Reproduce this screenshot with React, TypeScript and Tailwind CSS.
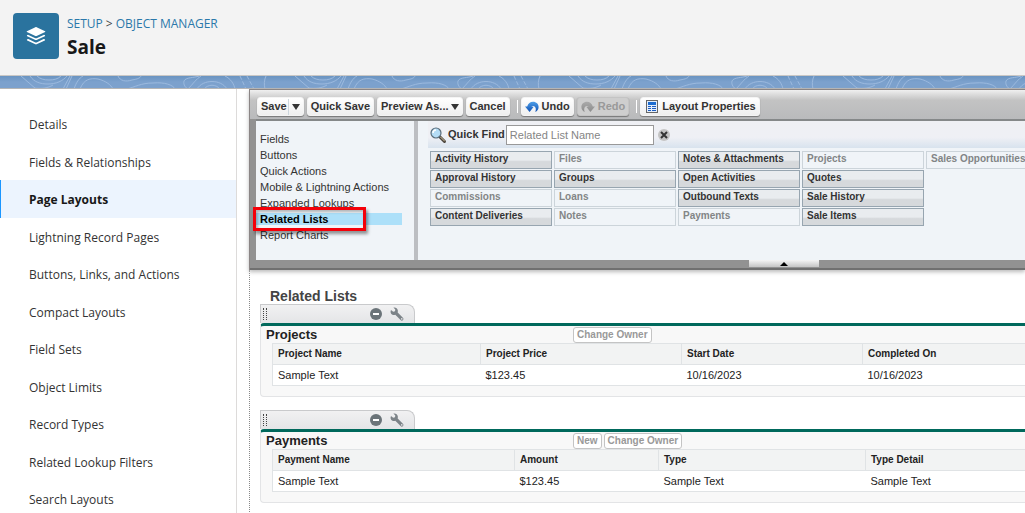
import type { ReactNode } from "react";

const navItems = [
  "Details",
  "Fields & Relationships",
  "Page Layouts",
  "Lightning Record Pages",
  "Buttons, Links, and Actions",
  "Compact Layouts",
  "Field Sets",
  "Object Limits",
  "Record Types",
  "Related Lookup Filters",
  "Search Layouts",
];

const categories = [
  "Fields",
  "Buttons",
  "Quick Actions",
  "Mobile & Lightning Actions",
  "Expanded Lookups",
  "Related Lists",
  "Report Charts",
];

type PaletteItem = { label: string; used?: boolean };

// filled column by column
const palette: PaletteItem[] = [
  { label: "Activity History" },
  { label: "Approval History" },
  { label: "Commissions", used: true },
  { label: "Content Deliveries" },
  { label: "Files", used: true },
  { label: "Groups" },
  { label: "Loans", used: true },
  { label: "Notes", used: true },
  { label: "Notes & Attachments" },
  { label: "Open Activities" },
  { label: "Outbound Texts" },
  { label: "Payments", used: true },
  { label: "Projects", used: true },
  { label: "Quotes" },
  { label: "Sale History" },
  { label: "Sale Items" },
  { label: "Sales Opportunities", used: true },
];

type Column = { label: string; value: string; width: string };

const projectColumns: Column[] = [
  { label: "Project Name", value: "Sample Text", width: "w-[208px]" },
  { label: "Project Price", value: "$123.45", width: "w-[201px]" },
  { label: "Start Date", value: "10/16/2023", width: "w-[181px]" },
  { label: "Completed On", value: "10/16/2023", width: "w-auto" },
];

const paymentColumns: Column[] = [
  { label: "Payment Name", value: "Sample Text", width: "w-[242px]" },
  { label: "Amount", value: "$123.45", width: "w-[144px]" },
  { label: "Type", value: "Sample Text", width: "w-[207px]" },
  { label: "Type Detail", value: "Sample Text", width: "w-auto" },
];

function LayersIcon() {
  return (
    <svg viewBox="0 0 20 20" className="h-5 w-5" fill="#fff" aria-hidden>
      <path d="M9.4 1.2 0.9 5.2c-.4.2-.4.7 0 .9l8.5 4c.4.2.8.2 1.2 0l8.5-4c.4-.2.4-.7 0-.9l-8.5-4c-.4-.2-.8-.2-1.2 0z" />
      <path d="M1 9.3c.3-.3.9-.6 1.4-.4l7 3.3c.4.2.8.2 1.2 0l7-3.3c.5-.2 1.1.1 1.4.4.3.3.1.7-.2.9l-8.2 3.9c-.4.2-.8.2-1.2 0l-8.2-3.9c-.3-.2-.5-.6-.2-.9z" />
      <path d="M1 13.5c.3-.3.9-.6 1.4-.4l7 3.3c.4.2.8.2 1.2 0l7-3.3c.5-.2 1.1.1 1.4.4.3.3.1.7-.2.9l-8.2 3.9c-.4.2-.8.2-1.2 0l-8.2-3.9c-.3-.2-.5-.6-.2-.9z" />
    </svg>
  );
}

function ArrowCurve({ className, from, to }: { className: string; from: string; to: string }) {
  const id = `curve-${from.slice(1)}`;
  return (
    <svg viewBox="0 0 14 12" className={className} aria-hidden>
      <defs>
        <linearGradient id={id} x1="0" y1="0" x2="0" y2="1">
          <stop offset="0" stopColor={from} />
          <stop offset="1" stopColor={to} />
        </linearGradient>
      </defs>
      <path
        d="M0 5.500H2.200C3 2.400 5.400 .7 8 .7c3.300 0 5.600 2.400 5.600 5.200 0 2.300-1.300 4.200-3.400 5.200.7-1.600.8-3.200.3-4.400C9.900 5.400 8.900 4.800 7.900 4.900c-.9.100-1.400.4-1.600.700L8.700 5.700 4.600 11z"
        fill={`url(#${id})`}
      />
    </svg>
  );
}

function PropertiesIcon() {
  return (
    <svg viewBox="0 0 12 13" className="mr-px ml-0.5 h-[13px] w-3" aria-hidden>
      <rect x=".5" y=".5" width="11" height="12" fill="#e4eefb" stroke="#666" />
      <rect x="2" y="2" width="8" height="3" fill="#1c6cd0" />
      <path d="M2 6.500h3M6 6.500h4M2 8.500h3M6 8.500h4M2 10.500h3M6 10.500h4" stroke="#1c5cc0" />
    </svg>
  );
}

function SearchIcon() {
  return (
    <svg viewBox="0 0 16 16" className="h-4 w-4" aria-hidden>
      <path d="m9.500 9.500 5 5" stroke="#4b443c" strokeWidth="3" strokeLinecap="round" />
      <path d="m10.500 10 4 4" stroke="#d9c9a3" strokeLinecap="round" />
      <circle cx="6" cy="6" r="5" fill="#b4dcf5" stroke="#5b6e7c" strokeWidth="1.200" />
      <path d="M3 6a3 3 0 0 1 3-3" stroke="#fff" strokeWidth="1.500" fill="none" />
    </svg>
  );
}

function WrenchIcon() {
  return (
    <svg viewBox="0 0 14 14" className="block h-[14px] w-[14px]" aria-hidden>
      <path
        d="M3.4.5 5.300 2.400 5 4.300 3.200 4.700 1 3C0 4.800.7 6.900 2.400 7.700c1 .5 2 .4 2.900.1l5.300 5.300c.7.7 1.800.7 2.400 0s.6-1.700-.1-2.400L7.700 5.400c.4-1.300.2-2.700-.8-3.800C6 .6 4.700.2 3.400.5z"
        fill="#7c8388"
      />
      <circle cx="11.800" cy="11.900" r=".8" fill="#e9eaec" />
    </svg>
  );
}

function Caret() {
  return <span className="h-0 w-0 border-x-4 border-t-[6px] border-x-transparent border-t-[#333]" aria-hidden />;
}

function ToolButton({ children, disabled }: { children: ReactNode; disabled?: boolean }) {
  return (
    <button
      type="button"
      disabled={disabled}
      className="flex h-[19px] shrink-0 items-center gap-[3px] rounded-[3px] border border-[#f4f4f4] bg-linear-to-b from-white to-[#efefef] px-[3px] text-[11px] font-bold whitespace-nowrap text-[#333] shadow-[0_1px_1px_#777] disabled:border-[#c4c4c4] disabled:bg-[#cecece] disabled:bg-none disabled:text-[#999]"
    >
      {children}
    </button>
  );
}

function Divider() {
  return <span className="ml-1 h-[13px] w-px shrink-0 bg-white" aria-hidden />;
}

function Contours() {
  return (
    <svg className="block h-3 w-full" aria-hidden>
      <defs>
        <pattern id="contours" width="274" height="13" patternUnits="userSpaceOnUse">
          <g fill="none" stroke="#9bb9de" strokeWidth="1">
            <path d="M21 0 36 13M30 0c4 6 10 8 18 8s15-3 19-8M37 0c3 3 7 4 12 4s9-1 12-4M34 12c8 1 14 0 19-3M63 13l7-13" />
            <path d="M66 13l6-13M74 13c2-6 5-11 9-13M80 13c4-10 10-11 18-10 8 2 13 6 15 10" />
            <path d="M118 0c2 5 8 6 14 4 6-1 8-2 9-4M127 13c8-2 14-6 26-6 12-1 20 2 22 6" />
            <path d="M184 5c2-4 10-3 15-5M184 5c-1 4 2 7 4 8M188 13c5-5 8-10 13-13M197 13c6-10 24-10 30 0M204 13c4-5 12-5 16 0" />
            <path d="M225 0c6 3 9 8 10 13M266 0c-2 4-2 9-1 13" />
            <path d="M240 0l6 13M247 0l7 13" strokeDasharray="4 2" />
          </g>
        </pattern>
      </defs>
      <rect width="100%" height="12" fill="url(#contours)" />
    </svg>
  );
}

function RelatedList({ title, actions, columns }: { title: string; actions: string[]; columns: Column[] }) {
  return (
    <section className="mb-[13px]">
      <div className="flex h-[19px] w-[155px] items-center rounded-tr-lg border border-b-0 border-[#c9cacc] bg-linear-to-b from-[#f1f1f2] to-[#e4e5e7] pr-2.5 pl-0.5">
        <span className="h-3 w-1 border-x border-dotted border-[#444]" aria-hidden />
        <button type="button" aria-label={`Remove ${title}`} className="ml-auto grid h-3 w-3 place-items-center rounded-full bg-[#6b7479]">
          <span className="h-0.5 w-1.5 bg-white" />
        </button>
        <button type="button" aria-label={`Edit ${title}`} className="ml-2">
          <WrenchIcon />
        </button>
      </div>
      <div className="h-[74px] rounded-l-[4px] border border-t-3 border-r-0 border-[#e3e4e6] border-t-[#00695c] bg-[#f8f8f8] pl-[11px]">
        <div className="flex h-[17px] items-center">
          <h3 className="-ml-1.5 w-[307px] text-[13px] leading-4 font-bold text-[#222]">{title}</h3>
          <div className="flex gap-0.5">
            {actions.map((action) => (
              <button
                key={action}
                type="button"
                className="h-4 rounded-[3px] border border-[#c4c4c4] bg-white px-[3px] text-[10px] leading-[14px] font-bold text-[#999]"
              >
                {action}
              </button>
            ))}
          </div>
        </div>
        <table className="w-full table-fixed border-collapse bg-white text-left text-[11px] text-[#222]">
          <thead>
            <tr className="h-[21px] bg-[#f2f3f3]">
              {columns.map((column) => (
                <th
                  key={column.label}
                  className={`${column.width} border border-[#e0e3e5] px-[5px] py-0 text-[10px] leading-4 font-bold last:border-r-0`}
                >
                  {column.label}
                </th>
              ))}
            </tr>
          </thead>
          <tbody>
            <tr className="h-[21px] border border-r-0 border-[#e0e3e5]">
              {columns.map((column) => (
                <td key={column.label} className="px-[5px] py-0 leading-4">
                  {column.value}
                </td>
              ))}
            </tr>
          </tbody>
        </table>
      </div>
    </section>
  );
}

function Editor() {
  return (
    <div className="relative border-t border-l border-[#8b8585] bg-[#929292] pl-1.5 shadow-[0_2px_4px_#bbb]">
      <div className="-ml-1.5 flex h-[29px] items-center gap-[3px] bg-linear-to-b from-[#f0f0f0] via-[#c3c3c3] via-35% to-[#b9babc] pt-1 pl-[7px]">
        <ToolButton>
          Save
          <span className="-ml-0.5 h-4 w-px bg-[#ccd6dd]" />
          <Caret />
        </ToolButton>
        <ToolButton>Quick Save</ToolButton>
        <ToolButton>
          <span className="-mr-px">Preview As...</span>
          <Caret />
        </ToolButton>
        <ToolButton>Cancel</ToolButton>
        <Divider />
        <ToolButton>
          <ArrowCurve className="h-3 w-[14px]" from="#4f9fe8" to="#0c4fb4" />
          Undo
        </ToolButton>
        <ToolButton disabled>
          <ArrowCurve className="h-3 w-[14px] -scale-x-100" from="#aaaaaa" to="#8c8c8c" />
          Redo
        </ToolButton>
        <Divider />
        <ToolButton>
          <PropertiesIcon />
          Layout Properties
        </ToolButton>
      </div>
      <div className="flex h-[141px] border-t-2 border-[#858889] bg-[#bcbec2]">
        <ul className="mr-1 w-[158px] shrink-0 bg-[#f0f4f8] pt-2.5 text-[11px] text-[#333]">
          {categories.map((category) => (
            <li key={category} className="flex h-4 items-center">
              <button
                type="button"
                className={
                  category === "Related Lists"
                    ? "h-3 w-[146px] bg-[#ade0f9] pl-1 text-left leading-3 font-bold text-black"
                    : "pl-1 leading-4"
                }
              >
                {category}
              </button>
            </li>
          ))}
        </ul>
        <div className="min-w-0 flex-1 overflow-hidden bg-[#f0f4f8] pl-2.5">
          <div className="flex h-[27px] items-center bg-linear-to-b from-[#eff0f4] via-[#eff0f5] via-60% to-[#d8e3ee] pl-0.5">
            <SearchIcon />
            <label htmlFor="quick-find" className="ml-0.5 text-[11px] font-bold text-[#333]">
              Quick Find
            </label>
            <input
              id="quick-find"
              placeholder="Related List Name"
              className="ml-px h-5 w-[148px] border border-[#999] bg-white px-[3px] text-[11px] placeholder:text-[#858585]"
            />
            <button type="button" aria-label="Clear" className="ml-1 grid h-3 w-3 place-items-center rounded-full bg-[#c4c4c4]">
              <svg viewBox="0 0 8 8" className="h-2 w-2" aria-hidden>
                <path d="m1 1 6 6M7 1 1 7" stroke="#333" strokeWidth="2" />
              </svg>
            </button>
          </div>
          <ul className="mt-[3px] ml-0.5 grid auto-cols-[122px] grid-flow-col grid-rows-[repeat(4,18px)] gap-x-0.5 gap-y-px text-[10px] leading-[14px] font-bold">
            {palette.map((item) => (
              <li
                key={item.label}
                className={
                  item.used
                    ? "border border-[#ccd4da] px-1 whitespace-nowrap text-[#828586]"
                    : "border border-[#97a5b0] bg-linear-to-b from-[#e9ecef] from-50% to-[#d6d9dc] to-60% px-1 whitespace-nowrap text-[#333]"
                }
              >
                {item.label}
              </li>
            ))}
          </ul>
        </div>
      </div>
      <div className="-ml-1.5 flex h-[10px] items-start border-b-2 border-[#707070]">
        <button
          type="button"
          aria-label="Collapse palette"
          className="ml-[499px] grid h-[7px] w-[70px] place-items-center bg-linear-to-b from-[#f5f5f5] to-[#c5c5c5]"
        >
          <span className="h-0 w-0 border-x-4 border-b-4 border-x-transparent border-b-black" />
        </button>
      </div>
      {/* callout around the selected category */}
      <div className="absolute top-[117px] left-[3px] h-6 w-[113px] border-3 border-[#f40009] shadow-[2px_3px_3px_#0006,inset_2px_2px_3px_#0004]" />
    </div>
  );
}

export default function App() {
  return (
    <div className="flex h-screen flex-col overflow-hidden bg-white font-['Liberation_Sans',Arial,sans-serif]">
      <header className="flex h-[76px] shrink-0 items-start gap-2 border-b border-[#c9c7c5] bg-[#f3f3f3] pt-[13px] pl-[13px] font-['Open_Sans','Noto_Sans',sans-serif]">
        <div className="grid h-[46px] w-[46px] place-items-center rounded-[4px] bg-[#2a739e]">
          <LayersIcon />
        </div>
        <div>
          <nav aria-label="Breadcrumb" className="flex gap-[3px] pt-0.5 text-xs leading-[18px] text-[#2a78aa]">
            <a href="#setup">SETUP</a>
            <span className="text-[#444]">&gt;</span>
            <a href="#objects">OBJECT MANAGER</a>
          </nav>
          <h1 className="text-[19px] leading-7 font-bold text-[#181818]">Sale</h1>
        </div>
      </header>
      <div className="h-[13px] shrink-0 border-b border-[#b5b5b5] bg-linear-to-b from-[#6a94c1] to-[#7ca1cd] to-50%">
        <Contours />
      </div>
      <div className="flex min-h-0 flex-1">
        <nav
          aria-label="Object settings"
          className="w-[237px] shrink-0 border-r border-[#dddbda] pt-4 font-['Open_Sans','Noto_Sans',sans-serif] text-xs text-[#333]"
        >
          <ul>
            {navItems.map((item) => (
              <li key={item} className="odd:h-[38px] even:h-[37px]">
                <a
                  href="#"
                  aria-current={item === "Page Layouts" ? "page" : undefined}
                  className="flex h-full items-center border-l border-transparent pt-0.5 pl-7 aria-[current]:border-[#1b96ff] aria-[current]:bg-[#ecf4fe] aria-[current]:font-bold aria-[current]:text-[#181818]"
                >
                  {item}
                </a>
              </li>
            ))}
          </ul>
        </nav>
        <main className="ml-3 min-w-0 flex-1">
          <Editor />
          <div className="overflow-hidden border-l border-dotted border-[#888] pt-[18px] pl-2.5">
            <h2 className="ml-2.5 text-sm leading-4 font-bold text-[#444]">Related Lists</h2>
            <RelatedList title="Projects" actions={["Change Owner"]} columns={projectColumns} />
            <RelatedList title="Payments" actions={["New", "Change Owner"]} columns={paymentColumns} />
          </div>
        </main>
      </div>
    </div>
  );
}
